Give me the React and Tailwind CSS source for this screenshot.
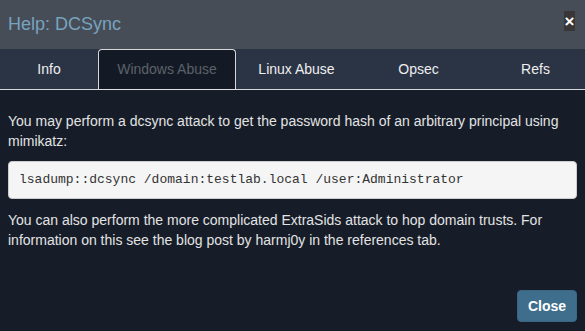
export default function App() {
  const tabs = [
    { label: "Info", w: "w-[98px]" },
    { label: "Windows Abuse", w: "w-[138px]", active: true },
    { label: "Linux Abuse", w: "w-[121px]" },
    { label: "Opsec", w: "w-[123px]" },
    { label: "Refs", w: "flex-1 pl-[6px]" },
  ];
  return (
    <div className="w-[585px] h-[331px] bg-[#161d29] flex flex-col overflow-hidden font-['Liberation_Sans',Arial,sans-serif]">
      <div className="h-[49px] bg-[#474d57] flex items-center justify-between pl-2 pr-[10px] shrink-0">
        <h4 className="text-[18px] text-[#77a3bf] leading-none mb-[2px]">Help: DCSync</h4>
        <button className="w-[11px] h-[20px] bg-[#3a3536] text-white text-[17px] font-bold leading-none flex items-center justify-center mb-[7px]">
          ×
        </button>
      </div>
      <div className="h-[41px] bg-[#2a3445] flex items-end shrink-0">
        {tabs.map((t) => (
          <div
            key={t.label}
            className={`${t.w} h-[41px] flex items-center justify-center text-[14px] ${
              t.active
                ? "bg-[#131a26] border border-[#d8d8d8] border-b-[#e0e0e0] rounded-t-[4px] text-[#5d6168]"
                : "border-b border-[#d8d8d8] text-[#eeeeee] pt-[1px]"
            }`}
          >
            {t.label}
          </div>
        ))}
      </div>
      <div className="flex-1 px-2 pt-[21px] text-[14px] leading-[20px] text-[#e3e3e3] flex flex-col">
        <p>You may perform a dcsync attack to get the password hash of an arbitrary principal using mimikatz:</p>
        <pre className="mt-[10px] bg-[#f5f5f5] border border-[#cccccc] rounded-[4px] px-[10px] py-[9px] text-[13px] leading-[18px] text-[#333333] font-['Liberation_Mono','Courier_New',monospace]">
          lsadump::dcsync /domain:testlab.local /user:Administrator
        </pre>
        <p className="mt-[11px]">
          You can also perform the more complicated ExtraSids attack to hop domain trusts. For information on this see the blog post by harmj0y in the references tab.
        </p>
        <div className="flex-1" />
        <div className="flex justify-end pb-[9px]">
          <button className="bg-[#3f6e8d] text-white font-bold text-[14px] rounded-[4px] border border-[#3a6584] w-[60px] h-[32px] flex items-center justify-center">
            Close
          </button>
        </div>
      </div>
    </div>
  );
}
